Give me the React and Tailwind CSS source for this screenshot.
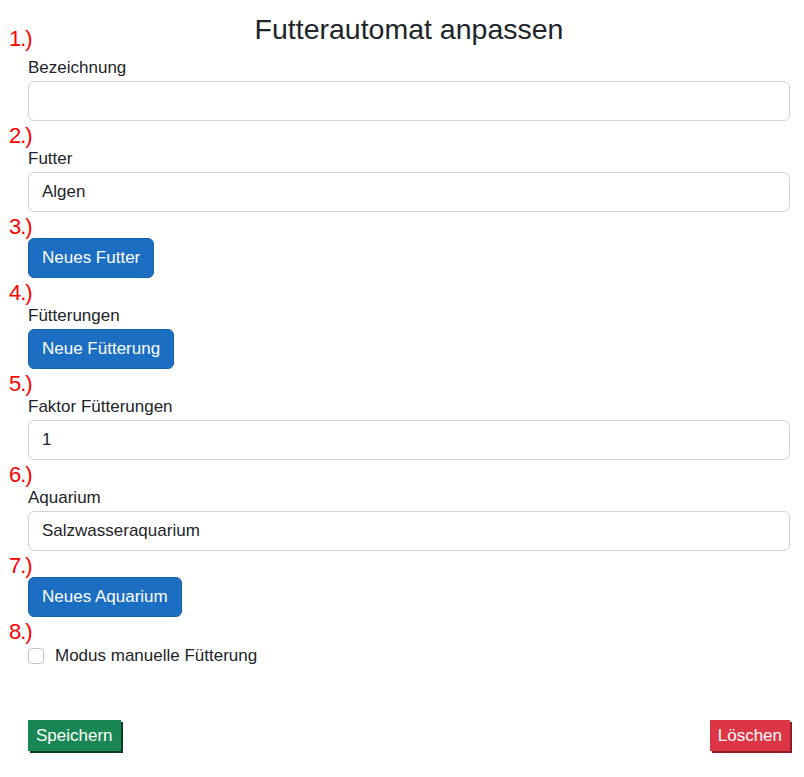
import React, { useState } from 'react';

const font = { fontFamily: '"Liberation Sans", Arial, sans-serif' };

function Num({ children, first }) {
  return (
    <div className={`${first ? 'h-[32px]' : 'h-[26px]'} -ml-[19px] text-[22px] leading-[29px] tracking-[-1px] text-[#ff0000]`}>
      {children}
    </div>
  );
}

function Label({ children }) {
  return <div className="h-[25px] leading-[24px] text-[17px] text-[#212529]">{children}</div>;
}

function Field({ value }) {
  return (
    <input
      defaultValue={value}
      className="block h-[40px] w-full rounded-[6px] border border-[#ced4da] bg-white px-[13px] text-[17px] text-[#212529] outline-none"
      style={font}
    />
  );
}

function BlueButton({ children }) {
  return (
    <button
      className="h-[40px] rounded-[6px] border border-[#1861ac] bg-[#1b6ec2] px-[13px] text-[17px] text-white"
      style={font}
    >
      {children}
    </button>
  );
}

export default function App() {
  const [manual, setManual] = useState(false);

  return (
    <div className="min-h-screen w-full bg-white pl-[28px] pr-[14px]" style={font}>
      <h1 className="h-[24px] pt-[12px] text-center text-[28.5px] font-normal leading-[34px] text-[#212529]">
        Futterautomat anpassen
      </h1>

      <Num first>1.)</Num>
      <Label>Bezeichnung</Label>
      <Field value="" />

      <Num>2.)</Num>
      <Label>Futter</Label>
      <Field value="Algen" />

      <Num>3.)</Num>
      <BlueButton>Neues Futter</BlueButton>

      <Num>4.)</Num>
      <Label>Fütterungen</Label>
      <BlueButton>Neue Fütterung</BlueButton>

      <Num>5.)</Num>
      <Label>Faktor Fütterungen</Label>
      <Field value="1" />

      <Num>6.)</Num>
      <Label>Aquarium</Label>
      <Field value="Salzwasseraquarium" />

      <Num>7.)</Num>
      <BlueButton>Neues Aquarium</BlueButton>

      <Num>8.)</Num>
      <label className="flex h-[25px] items-center gap-[11px] text-[17px] text-[#212529]">
        <input
          type="checkbox"
          checked={manual}
          onChange={(e) => setManual(e.target.checked)}
          className="h-[16px] w-[16px] appearance-none rounded-[4px] border border-[#c4c8cc] bg-white"
        />
        Modus manuelle Fütterung
      </label>

      <div className="mt-[52px] flex items-center justify-between">
        <button className="h-[31px] bg-[#198754] px-[8px] text-[17px] text-white shadow-[2px_2px_0_#0b3d25]" style={font}>
          Speichern
        </button>
        <button className="h-[31px] bg-[#dc3545] px-[8px] text-[17px] text-white shadow-[2px_2px_0_#8e1b26]" style={font}>
          Löschen
        </button>
      </div>
    </div>
  );
}
